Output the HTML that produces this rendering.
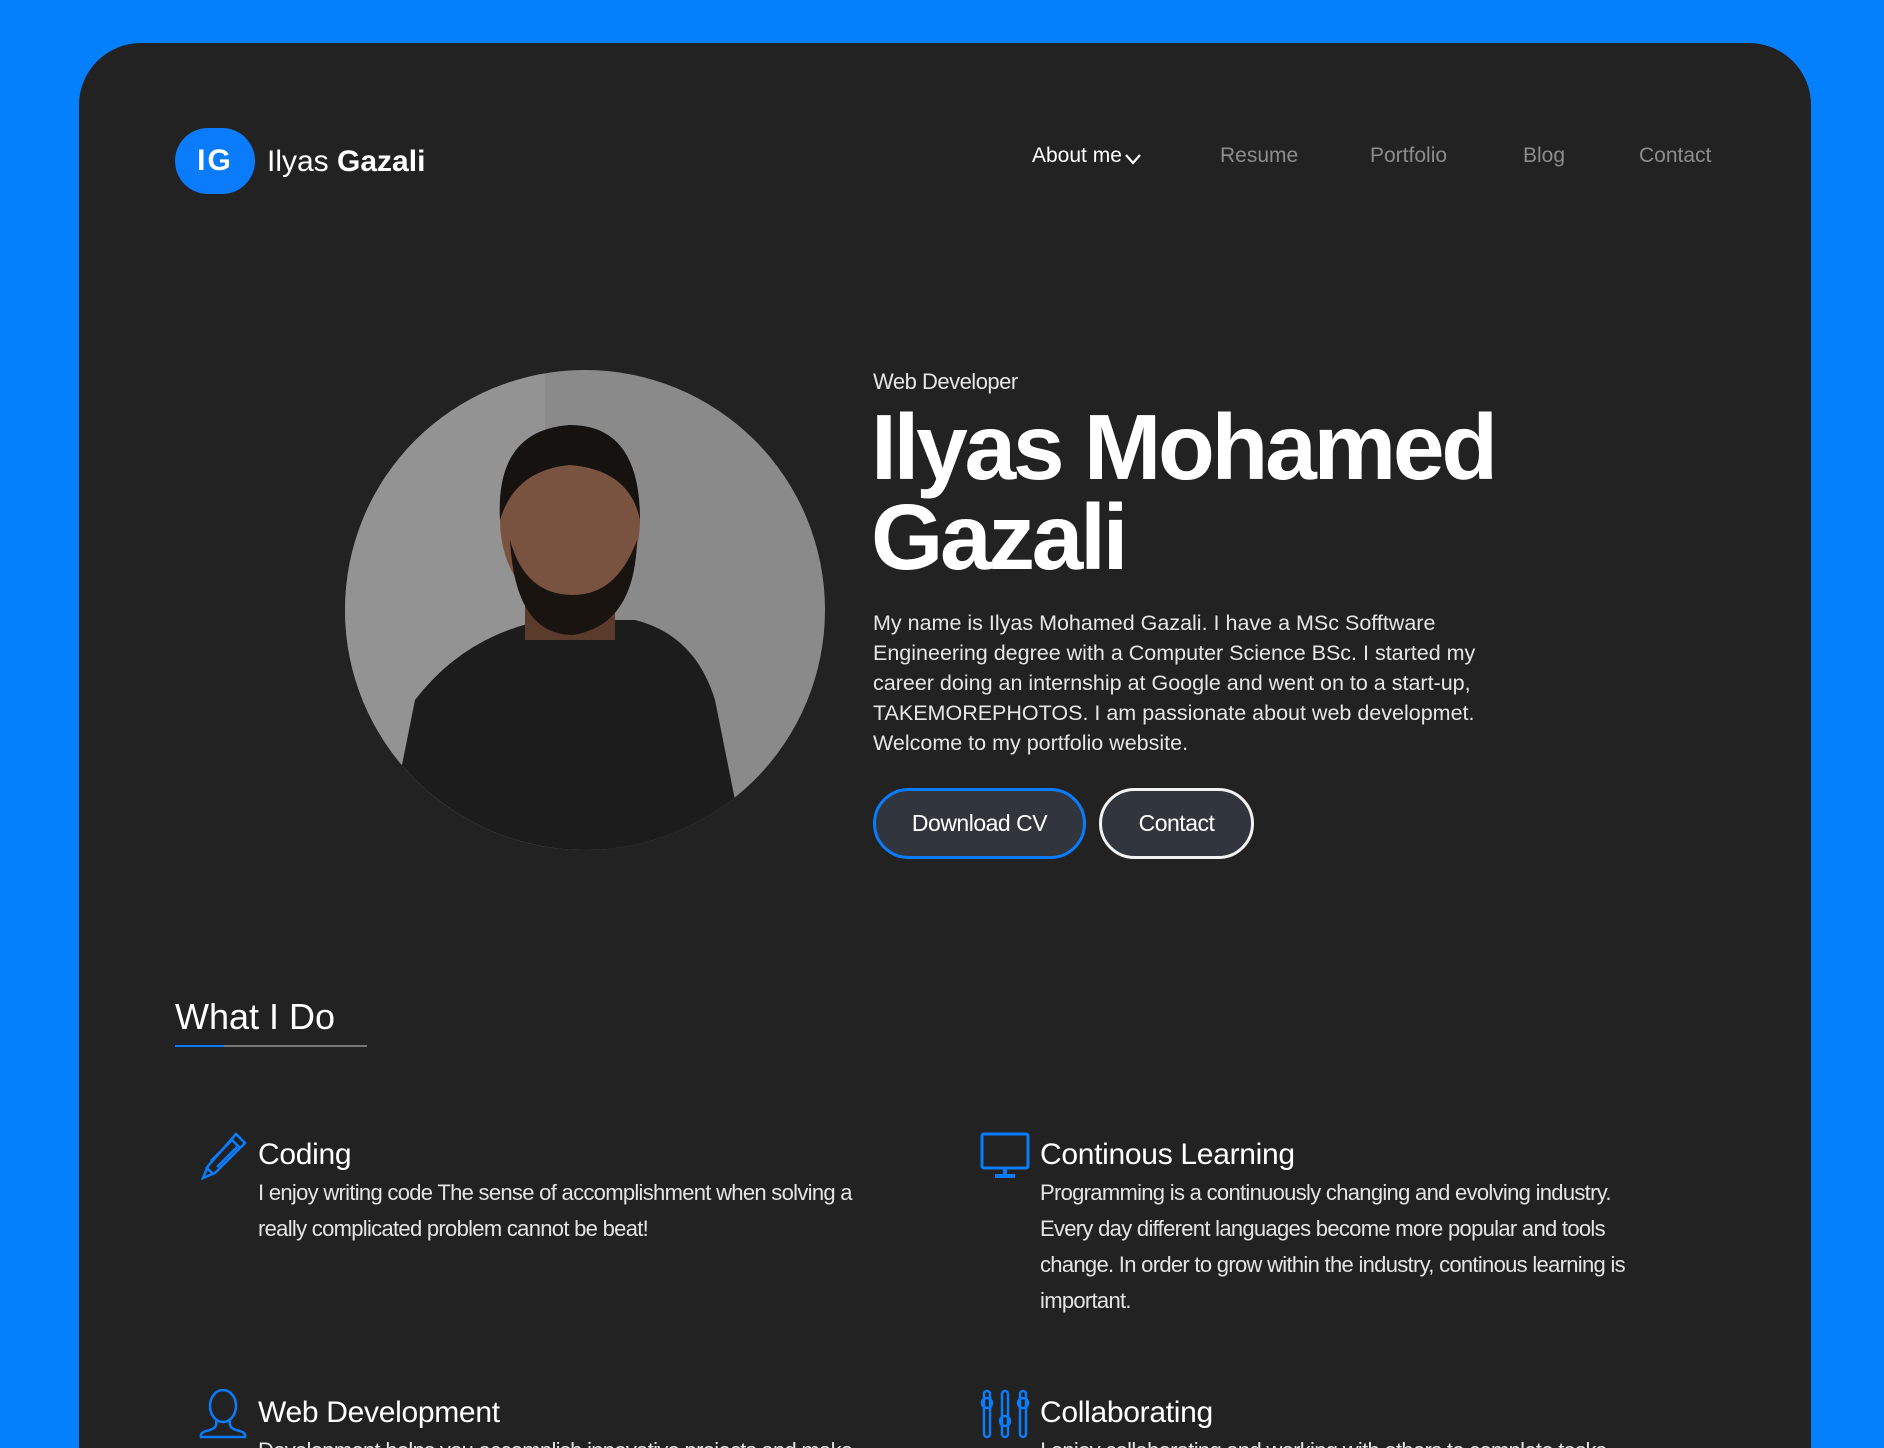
<!DOCTYPE html>
<html><head><meta charset="utf-8"><style>
*{margin:0;padding:0;box-sizing:border-box}
html,body{width:1884px;height:1448px;overflow:hidden;background:#0580fd;font-family:"Liberation Sans",sans-serif;color:#fff}
#w{position:relative;width:1884px;height:1448px;overflow:hidden}
.card{position:absolute;left:79px;top:43px;width:1732px;height:1405px;background:#222222;border-radius:62px 62px 0 0}
.abs{position:absolute;white-space:nowrap}
.logo{left:175px;top:128px;width:80px;height:66px;border-radius:33px;background:#0a7cfb;font-weight:bold;font-size:30px;line-height:66px;text-align:center;letter-spacing:2px}
.nav{font-size:21px;color:#8c8c8c;top:144px}
.p{font-size:21.5px;line-height:30px;color:#e6e6e6;white-space:normal}
.btn{top:788px;height:71px;border-radius:36px;background:#30353e;font-size:23px;line-height:65px;text-align:center;letter-spacing:-0.5px}
.t{font-size:30px;letter-spacing:-0.3px}
.b{font-size:22px;line-height:36px;color:#e4e4e4;letter-spacing:-0.7px;white-space:normal}
</style></head><body><div id="w">
<div class="card"></div>
<div class="abs logo">IG</div>
<div class="abs" style="left:267px;top:145px;font-size:30px">Ilyas <b>Gazali</b></div>
<div class="abs nav" style="left:1032px;color:#fff">About me<svg width="18" height="14" viewBox="0 0 18 14" style="margin-left:2px;vertical-align:-4px"><path d="M2 3l7 8 7-8" fill="none" stroke="#fff" stroke-width="2.2"/></svg></div>
<div class="abs nav" style="left:1220px">Resume</div>
<div class="abs nav" style="left:1370px">Portfolio</div>
<div class="abs nav" style="left:1523px">Blog</div>
<div class="abs nav" style="left:1639px">Contact</div>

<svg class="abs" style="left:345px;top:370px" width="480" height="480" viewBox="0 0 480 480">
<defs><clipPath id="c"><circle cx="240" cy="240" r="240"/></clipPath></defs>
<g clip-path="url(#c)">
<rect width="480" height="480" fill="#8a8a8a"/>
<rect x="0" y="0" width="200" height="480" fill="#939393"/>
<path d="M40 480 L70 330 Q120 265 200 250 L290 250 Q350 265 370 330 L400 480Z" fill="#1c1c1c"/>
<rect x="180" y="190" width="90" height="80" fill="#5a3b2c"/>
<ellipse cx="225" cy="150" rx="70" ry="92" fill="#7a5240"/>
<path d="M155 150 Q150 60 225 55 Q295 55 295 150 Q285 100 225 95 Q170 100 155 150Z" fill="#151210"/>
<path d="M165 170 Q170 265 228 265 Q290 255 292 170 Q272 225 228 225 Q180 225 165 170Z" fill="#1a1411"/>
</g></svg>

<div class="abs" style="left:873px;top:369px;font-size:22px;color:#e6e6e6;letter-spacing:-0.5px">Web Developer</div>
<div class="abs" style="left:871px;top:402px;font-size:93px;line-height:90px;font-weight:bold;letter-spacing:-3.3px">Ilyas Mohamed<br>Gazali</div>
<div class="abs p" style="left:873px;top:608px;width:640px">My name is Ilyas Mohamed Gazali. I have a MSc Sofftware Engineering degree with a Computer Science BSc. I started my career doing an internship at Google and went on to a start-up, TAKEMOREPHOTOS. I am passionate about web developmet. Welcome to my portfolio website.</div>
<div class="abs btn" style="left:873px;width:213px;border:3px solid #0a7cfb">Download CV</div>
<div class="abs btn" style="left:1099px;width:155px;border:3px solid #f2f2f2">Contact</div>

<div class="abs" style="left:175px;top:996px;font-size:36px">What I Do</div>
<div class="abs" style="left:175px;top:1045px;width:192px;height:2px;background:#777"></div>
<div class="abs" style="left:175px;top:1045px;width:49px;height:2px;background:#0a7cfb"></div>

<svg class="abs" style="left:198px;top:1131px" width="50" height="50" viewBox="0 0 50 50" fill="none" stroke="#0a7cfb" stroke-width="2.5"><path d="M38 3l9 9-30 30-12 5 5-12z M33 8l9 9 M8 36l7 7 M13 30l20-20 M19 36l20-20"/></svg>
<div class="abs t" style="left:258px;top:1138px">Coding</div>
<div class="abs b" style="left:258px;top:1175px;width:640px">I enjoy writing code The sense of accomplishment when solving a really complicated problem cannot be beat!</div>

<svg class="abs" style="left:980px;top:1132px" width="50" height="48" viewBox="0 0 50 48" fill="none" stroke="#0a7cfb" stroke-width="3"><rect x="2" y="2" width="46" height="34" rx="2"/><path d="M25 36v6 M15 44h20" stroke-width="4"/></svg>
<div class="abs t" style="left:1040px;top:1138px">Continous Learning</div>
<div class="abs b" style="left:1040px;top:1175px;width:605px">Programming is a continuously changing and evolving industry. Every day different languages become more popular and tools change. In order to grow within the industry, continous learning is important.</div>

<svg class="abs" style="left:198px;top:1389px" width="50" height="50" viewBox="0 0 50 50" fill="none" stroke="#0a7cfb" stroke-width="2.5"><ellipse cx="25" cy="17" rx="13" ry="16"/><path d="M18 32 Q20 40 8 42 Q2 44 3 48 H47 Q48 44 42 42 Q30 40 32 32"/></svg>
<div class="abs t" style="left:258px;top:1396px">Web Development</div>
<div class="abs b" style="left:258px;top:1433px;width:640px">Development helps you accomplish innovative projects and make</div>

<svg class="abs" style="left:980px;top:1389px" width="50" height="50" viewBox="0 0 50 50" fill="none" stroke="#0a7cfb" stroke-width="2.5"><rect x="4" y="2" width="6" height="46" rx="3"/><rect x="22" y="2" width="6" height="46" rx="3"/><rect x="40" y="2" width="6" height="46" rx="3"/><circle cx="7" cy="14" r="5"/><circle cx="25" cy="32" r="5"/><circle cx="43" cy="14" r="5"/></svg>
<div class="abs t" style="left:1040px;top:1396px">Collaborating</div>
<div class="abs b" style="left:1040px;top:1433px;width:640px">I enjoy collaborating and working with others to complete tasks</div>
</div></body></html>
